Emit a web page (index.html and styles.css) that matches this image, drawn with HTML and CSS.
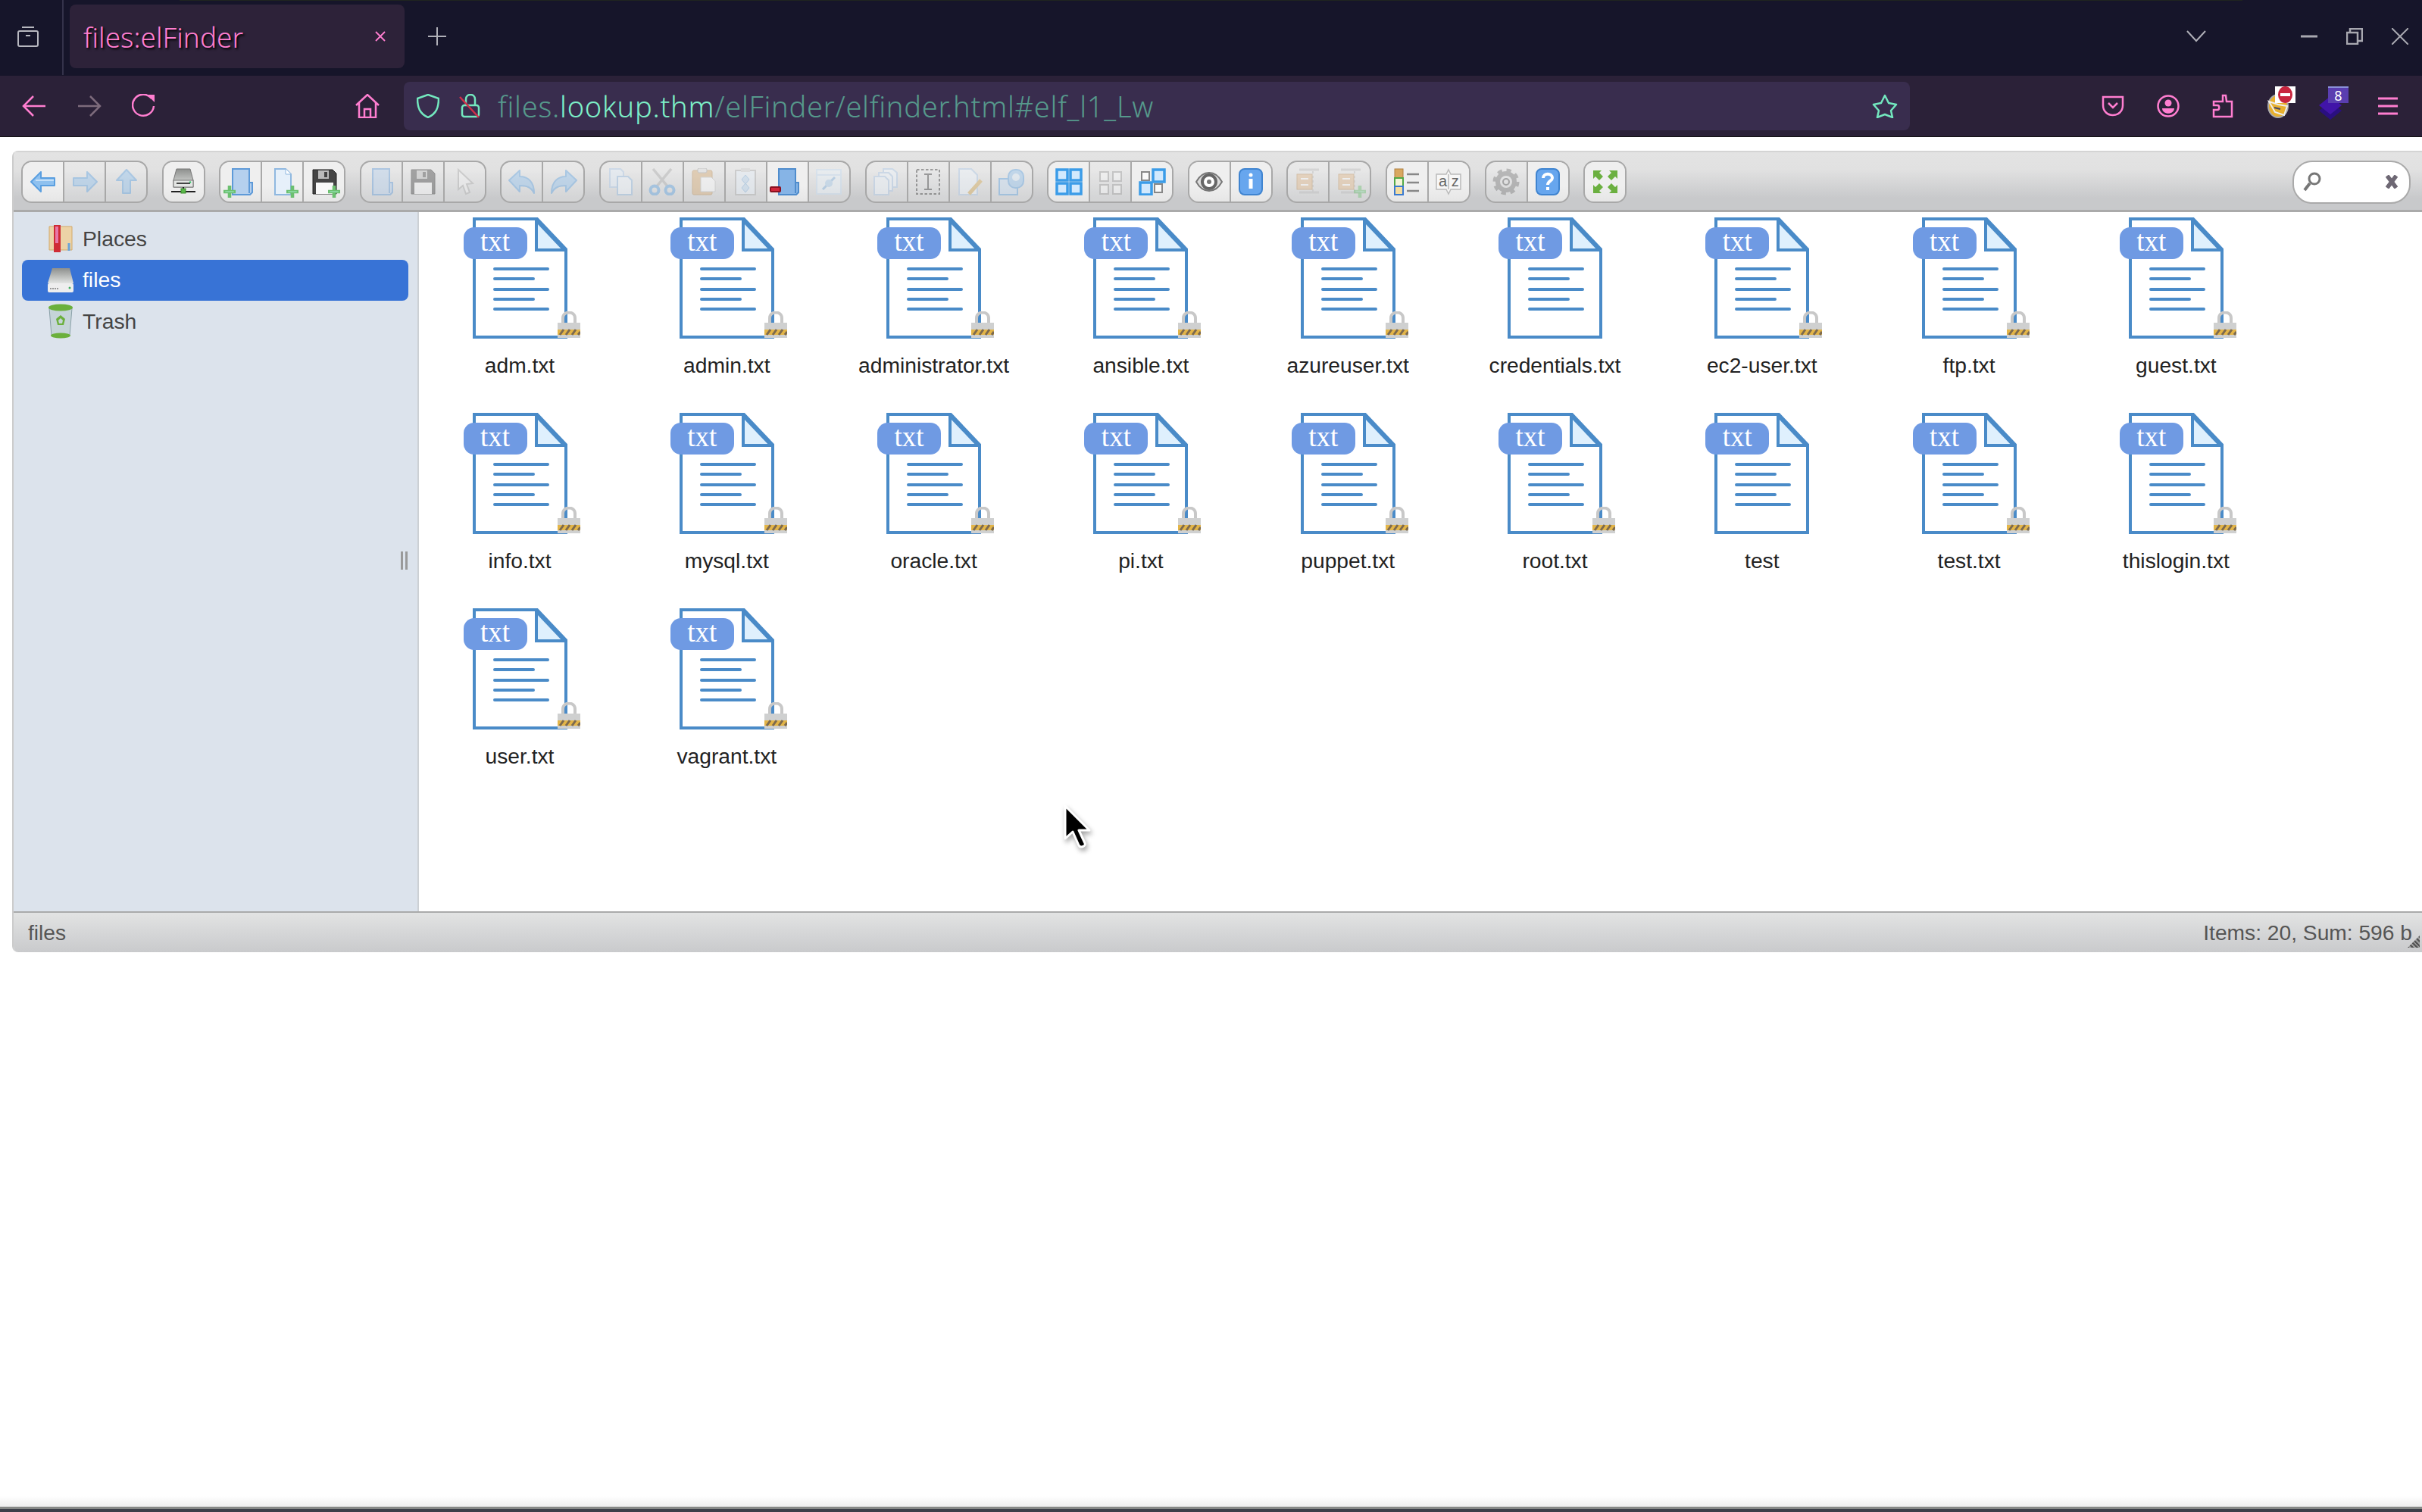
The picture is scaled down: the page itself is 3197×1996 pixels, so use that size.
FILE: index.html
```html
<!doctype html>
<html lang="en">

<head>
  <meta charset="utf-8">
  <title>files:elFinder</title>
  <link rel="stylesheet" href="styles.css">
</head>

<body>
  <svg class="defs" width="0" height="0">
    <defs>
      <linearGradient id="driveg" x1="0" y1="0" x2="0" y2="1"><stop offset="0" stop-color="#8d8f8d"/><stop offset="1" stop-color="#e2e4e2"/></linearGradient>
      <symbol id="i-back" viewBox="0 0 36 36"><path d="M2 18 15 5v8h18v10H15v8z" fill="#8fc1ef" stroke="#5a9fe0" stroke-width="2" stroke-linejoin="round"/><path d="M8 16h24" stroke="#c5e0f8" stroke-width="2"/></symbol>
      <symbol id="i-fwd" viewBox="0 0 36 36"><path d="M34 18 21 5v8H3v10h18v8z" fill="#8fc1ef" stroke="#5a9fe0" stroke-width="2" stroke-linejoin="round"/></symbol>
      <symbol id="i-up" viewBox="0 0 36 36"><path d="M18 2 5 16h8v17h10V16h8z" fill="#8fc1ef" stroke="#5a9fe0" stroke-width="2" stroke-linejoin="round"/></symbol>
      <symbol id="i-net" viewBox="0 0 36 36"><path d="M9 1h18l4 15v9H5v-9z" fill="url(#driveg)" stroke="#777"/><rect x="5" y="16" width="26" height="9" fill="#e4e6e4" stroke="#777"/><path d="M9 20h18" stroke="#444" stroke-width="2"/><circle cx="27" cy="18.500" r="1.200" fill="#35c46a"/><path d="M18 25v6M2 31h32" stroke="#222" stroke-width="2"/><rect x="15" y="27" width="6" height="6" fill="#58b848" stroke="#3c8a2e"/></symbol>
      <symbol id="i-plus" viewBox="0 0 14 14"><path d="M5 0h4v5h5v4H9v5H5V9H0V5h5z" fill="#6cc070"/><path d="M2 7h10" stroke="#9be7c0"/></symbol>
      <symbol id="i-folder" viewBox="0 0 36 36"><path d="M7 1h22v18h4v13l-3 3H7z" fill="#b5d0ee" stroke="#5e9ad8" stroke-width="2"/><path d="M29 19v14" stroke="#5e9ad8" stroke-width="2"/></symbol>
      <symbol id="i-folder-dark" viewBox="0 0 36 36"><path d="M7 1h22v18h4v13l-3 3H7z" fill="#86b4e6" stroke="#4f8ccc" stroke-width="2"/><path d="M29 19v14" stroke="#4f8ccc" stroke-width="2"/></symbol>
      <symbol id="i-doc" viewBox="0 0 36 36"><path d="M8 1h14l7 7v27H8z" fill="#e6f0fa" stroke="#8fb8e0" stroke-width="2"/><path d="M22 1v7h7" fill="#fff" stroke="#8fb8e0"/></symbol>
      <symbol id="i-floppy" viewBox="0 0 36 36"><path d="M3 2h26l5 5v27H3z" fill="#444" stroke="#222"/><rect x="10" y="3" width="14" height="11" fill="#bbb"/><rect x="18" y="5" width="4" height="7" fill="#444"/><rect x="7" y="19" width="23" height="15" fill="#f8f8f8"/></symbol>
      <symbol id="i-cursor" viewBox="0 0 36 36"><path d="M10 2v26l6-5 4 11 5-2-4-11 8-1z" fill="#f2f2f2" stroke="#aaa" stroke-width="2"/></symbol>
      <symbol id="i-undo" viewBox="0 0 36 36"><path d="M1 16 15 3v8c11 0 19 7 19 22-4-8-10-10-19-10v8z" fill="#8fc1ef" stroke="#5a9fe0" stroke-width="2" stroke-linejoin="round"/></symbol>
      <symbol id="i-redo" viewBox="0 0 36 36"><path d="M35 16 21 3v8C10 11 2 18 2 33c4-8 10-10 19-10v8z" fill="#8fc1ef" stroke="#5a9fe0" stroke-width="2" stroke-linejoin="round"/></symbol>
      <symbol id="i-copy" viewBox="0 0 36 36"><path d="M4 1h14l4 4v20H4z" fill="#e3eefa" stroke="#a9c7e6" stroke-width="2"/><path d="M14 11h14l5 5v19H14z" fill="#eef5fc" stroke="#8fb8e0" stroke-width="2"/></symbol>
      <symbol id="i-cut" viewBox="0 0 36 36"><path d="M6 1l20 24M30 1 10 25" stroke="#aaa" stroke-width="3.500"/><circle cx="8" cy="29" r="5.500" fill="none" stroke="#5a9fe0" stroke-width="4"/><circle cx="28" cy="29" r="5.500" fill="none" stroke="#5a9fe0" stroke-width="4"/></symbol>
      <symbol id="i-paste" viewBox="0 0 36 36"><rect x="3" y="3" width="26" height="32" rx="2" fill="#d6a970" stroke="#b98a4e"/><rect x="10" y="0" width="12" height="6" rx="2" fill="#ddd" stroke="#999"/><path d="M14 12h14l5 5v14H14z" fill="#fff" stroke="#bbb"/></symbol>
      <symbol id="i-dup" viewBox="0 0 36 36"><rect x="5" y="3" width="26" height="32" fill="#e8f1fa" stroke="#aaa" stroke-width="2"/><rect x="12" y="0" width="12" height="5" fill="#ccc"/><path d="M18 9l5 6-5 6-5-6zM18 20l5 6-5 6-5-6z" fill="#bcd8f2" stroke="#7eb0e0"/></symbol>
      <symbol id="i-empty" viewBox="0 0 36 36"><rect x="2" y="2" width="32" height="32" fill="#eaf3fb" stroke="#c4dcf2" stroke-width="2"/><path d="M2 9h32" stroke="#c4dcf2" stroke-width="2"/><path d="M10 28 26 12" stroke="#7eb0e0" stroke-width="3"/><circle cx="18" cy="20" r="5" fill="#a8ccee"/></symbol>
      <symbol id="i-stack" viewBox="0 0 36 36"><path d="M14 1h12l6 5v19H14z" fill="#eef5fc" stroke="#a9c7e6" stroke-width="2"/><path d="M8 6h13l5 5v19H8z" fill="#eef5fc" stroke="#a9c7e6" stroke-width="2"/><path d="M2 11h14l5 5v19H2z" fill="#eef5fc" stroke="#a9c7e6" stroke-width="2"/></symbol>
      <symbol id="i-rename" viewBox="0 0 36 36"><rect x="3" y="2" width="30" height="32" fill="none" stroke="#333" stroke-width="2" stroke-dasharray="3.500 2.500"/><path d="M13 8h10M13 28h10M18 8v20" stroke="#333" stroke-width="2"/></symbol>
      <symbol id="i-edit" viewBox="0 0 36 36"><path d="M4 1h16l8 8v26H4z" fill="#eef5fc" stroke="#a9c7e6" stroke-width="2"/><path d="M17 34 33 16" stroke="#d4a850" stroke-width="5"/></symbol>
      <symbol id="i-resize" viewBox="0 0 36 36"><rect x="2" y="14" width="24" height="21" fill="#c4dcf2" stroke="#5a9fe0" stroke-width="2"/><rect x="14" y="2" width="20" height="24" rx="9" fill="#8fc1ef" stroke="#5a9fe0" stroke-width="2"/><circle cx="24" cy="12" r="5" fill="#dcecfa"/></symbol>
      <symbol id="i-grid" viewBox="0 0 36 36"><g fill="#d2e9fd" stroke="#3b9ce8" stroke-width="3.500"><rect x="2" y="2" width="14" height="14"/><rect x="20" y="2" width="14" height="14"/><rect x="2" y="20" width="14" height="14"/><rect x="20" y="20" width="14" height="14"/></g></symbol>
      <symbol id="i-small" viewBox="0 0 36 36"><g fill="#fafafa" stroke="#999" stroke-width="2"><rect x="4" y="5" width="11" height="12"/><rect x="21" y="5" width="11" height="12"/><rect x="4" y="22" width="11" height="12"/><rect x="21" y="22" width="11" height="12"/></g></symbol>
      <symbol id="i-mixed" viewBox="0 0 36 36"><g fill="#d2e9fd" stroke="#3b9ce8" stroke-width="3.500"><rect x="19" y="2" width="15" height="16"/><rect x="2" y="19" width="15" height="16"/></g><g fill="#fafafa" stroke="#888" stroke-width="2"><rect x="4" y="5" width="10" height="11"/><rect x="21" y="21" width="10" height="11"/></g></symbol>
      <symbol id="i-eye" viewBox="0 0 36 36"><path d="M1 18C6 9 12 6 18 6s12 3 17 12c-5 9-11 12-17 12S6 27 1 18z" fill="#ddd" stroke="#777" stroke-width="2"/><circle cx="18" cy="18" r="9" fill="#fff" stroke="#666" stroke-width="4"/><circle cx="18" cy="18" r="3" fill="#777"/></symbol>
      <symbol id="i-info" viewBox="0 0 36 36"><rect x="3" y="1" width="30" height="34" rx="7" fill="#67a6ee" stroke="#3f84d0" stroke-width="2"/><circle cx="18" cy="9" r="2.500" fill="#fff"/><rect x="15.500" y="14" width="5" height="13" fill="#fff"/></symbol>
      <symbol id="i-cab" viewBox="0 0 36 36"><path d="M6 2h26M6 32h26" stroke="#bbb" stroke-width="3"/><path d="M24 4v28" stroke="#bbb" stroke-width="2" stroke-dasharray="3 3"/><rect x="3" y="8" width="20" height="20" fill="#e3b888" stroke="#c09058"/><path d="M8 14h10M8 22h10" stroke="#fff" stroke-width="2"/></symbol>
      <symbol id="i-sort" viewBox="0 0 36 36"><rect x="2" y="1" width="11" height="12" fill="#d9a860" stroke="#b08040"/><rect x="2" y="13" width="11" height="11" fill="#f4f4d8" stroke="#52a848" stroke-width="2"/><rect x="2" y="24" width="11" height="11" fill="#f4dca0" stroke="#3a7ad0" stroke-width="2"/><path d="M18 8h16M18 19h16M18 30h16" stroke="#888" stroke-width="2.500"/></symbol>
      <symbol id="i-gear" viewBox="0 0 36 36"><circle cx="18" cy="18" r="11" fill="none" stroke="#777" stroke-width="6"/><circle cx="18" cy="18" r="15" fill="none" stroke="#777" stroke-width="5" stroke-dasharray="6 5.800"/><circle cx="18" cy="18" r="4" fill="none" stroke="#555" stroke-width="2"/></symbol>
      <symbol id="i-help" viewBox="0 0 36 36"><rect x="3" y="1" width="30" height="34" rx="7" fill="#67a6ee" stroke="#3f84d0" stroke-width="2"/><path d="M12 13c0-7 12-7 12 0 0 4-6 4-6 9" fill="none" stroke="#fff" stroke-width="4"/><rect x="16" y="25" width="4" height="4" fill="#fff"/></symbol>
      <symbol id="i-full" viewBox="0 0 36 36"><g fill="#6bb040"><path d="M2 3h11l-3 3 5 5-5 5-5-5-3 3zM34 3v11l-3-3-5 5-5-5 5-5-3-3zM2 33V22l3 3 5-5 5 5-5 5 3 3zM34 33H23l3-3-5-5 5-5 5 5 3-3z"/></g></symbol>
      <symbol id="i-lock" viewBox="0 0 30 35"><path d="M7 17V9c0-10 16-10 16 0v8" fill="none" stroke="#c8c8c8" stroke-width="4"/><rect x="0" y="15" width="30" height="20" fill="#cfd0d0"/><rect x="0" y="24" width="30" height="7" fill="#e3b548"/><path d="M3 31l5-7M11 31l5-7M19 31l5-7M27 31l3-4" stroke="#7d6a4e" stroke-width="3"/></symbol>
      <symbol id="i-txt" viewBox="0 0 125 160"><path d="M2 2h83l38 40v116H2z" fill="#fff" stroke="#4a8bc8" stroke-width="4"/><path d="M84 4v39h37z" fill="#dff0fd" stroke="#4a8bc8" stroke-width="4"/><path d="M29 68h70M29 81h51M29 95h70M29 108h51M29 121h70" stroke="#4a8bc8" stroke-width="4" stroke-linecap="round"/></symbol>
    </defs>
  </svg>

  <header class="titlebar">
    <div class="tabs-btn">
      <svg width="32" height="32" viewBox="0 0 32 32" fill="none" stroke="#b8b8c0" stroke-width="2"><path d="M8 4h16"/><rect x="3" y="9" width="26" height="20" rx="2"/><path d="M13 15h6"/></svg>
    </div>
    <div class="tab">
      <span class="tab-title">files:elFinder</span>
      <svg width="14" height="14" viewBox="0 0 14 14" stroke="#ff7ed0" stroke-width="1.800"><path d="M1 1l12 12M13 1 1 13"/></svg>
    </div>
    <div class="newtab">
      <svg width="26" height="26" viewBox="0 0 26 26" stroke="#b0b0b8" stroke-width="2"><path d="M13 1v24M1 13h24"/></svg>
    </div>
    <div class="winbtns">
      <svg class="chev" width="26" height="16" viewBox="0 0 26 16" fill="none" stroke="#b0b0b8" stroke-width="2"><path d="M1 1l12 13L25 1"/></svg>
      <svg class="win" width="22" height="4" viewBox="0 0 22 4" stroke="#a8a8b0" stroke-width="3"><path d="M0 2h22"/></svg>
      <svg class="win" width="22" height="22" viewBox="0 0 22 22" fill="none" stroke="#a8a8b0" stroke-width="2.500"><rect x="1" y="6" width="14" height="15"/><path d="M5 5V1h16v16h-5"/></svg>
      <svg class="win" width="22" height="22" viewBox="0 0 22 22" stroke="#a8a8b0" stroke-width="2"><path d="M0 0l22 22M22 0 0 22"/></svg>
    </div>
  </header>

  <nav class="navbar">
    <span class="slot"><svg width="32" height="28" viewBox="0 0 32 28" fill="none" stroke="#ff7ed0" stroke-width="2.500"><path d="M31 14H3M15 1 2 14l13 13"/></svg></span>
    <span class="slot"><svg width="32" height="28" viewBox="0 0 32 28" fill="none" stroke="#7d6b7c" stroke-width="2.500"><path d="M1 14h28M17 1l13 13-13 13"/></svg></span>
    <span class="slot"><svg width="32" height="32" viewBox="0 0 32 32" fill="none" stroke="#ff7ed0" stroke-width="2.500"><path d="M26 6a14 14 0 1 0 3 10"/><path d="M20 1h10v10z" fill="#ff7ed0" stroke="none"/></svg></span>
    <span class="slot home"><svg width="32" height="32" viewBox="0 0 32 32" fill="none" stroke="#ff7ed0" stroke-width="2.500"><path d="M1 15 16 1l15 14M5 12v19h22V12M12 31V20h8v11"/></svg></span>
    <div class="urlbar">
      <svg class="shield" width="30" height="32" viewBox="0 0 30 32" fill="none" stroke="#73e8bf" stroke-width="2.500"><path d="M15 1 29 6c0 12-3 20-14 25C4 26 1 18 1 6z"/></svg>
      <svg class="padlock" width="28" height="32" viewBox="0 0 28 32" fill="none" stroke="#73e8bf" stroke-width="2.500"><path d="M9 14V7c0-8 12-8 12 0v7"/><rect x="4" y="15" width="22" height="15" rx="3"/><path d="M1 4l25 27" stroke="#d0304a"/></svg>
      <span class="url">files.<b>lookup.thm</b>/elFinder/elfinder.html#elf_l1_Lw</span>
      <svg class="star" width="34" height="32" viewBox="0 0 34 32" fill="none" stroke="#73e8bf" stroke-width="2.500" stroke-linejoin="round"><path d="M17 2l5 10 10 2-7 8 2 9-10-4-10 4 2-9-7-8 10-2z"/></svg>
    </div>
    <div class="navright">
      <span class="slot"><svg width="30" height="28" viewBox="0 0 30 28" fill="none" stroke="#ff7ed0" stroke-width="2.500"><path d="M2 2h26v11c0 8-6 13-13 13S2 21 2 13z"/><path d="M9 10l6 6 6-6"/></svg></span>
      <span class="slot"><svg width="30" height="30" viewBox="0 0 30 30" fill="none" stroke="#ff7ed0" stroke-width="2.500"><circle cx="15" cy="15" r="13.500"/><circle cx="15" cy="11" r="4.500" fill="#ff7ed0" stroke="none"/><path d="M7 18h16c0 9-16 9-16 0z" fill="#ff7ed0" stroke="none"/></svg></span>
      <span class="slot"><svg width="28" height="32" viewBox="0 0 28 32" fill="none" stroke="#ff7ed0" stroke-width="2.500"><path d="M10 10h4V2h4l1 8h7v20H2v-9h5c3 0 3-6 0-6H2v-5z"/></svg></span>
      <span class="slot ext">
        <svg width="32" height="32" viewBox="0 0 32 32"><ellipse cx="16" cy="16" rx="13" ry="15" fill="#e8b02e" stroke="#aaa" stroke-width="2"/><path d="M4 10l12 4 12 2-4 12-12-4z" fill="#e8b02e" stroke="#eee" stroke-width="2"/><path d="M11 18l8 2" stroke="#446" stroke-width="2"/></svg>
        <span class="ext-badge stop"><i></i></span>
      </span>
      <span class="slot ext">
        <svg class="ext-gem" width="34" height="34" viewBox="0 0 34 34"><path d="M17 8 32 20 17 32 2 20z" fill="#2a0f80"/><path d="M17 1 32 13 17 25 2 13z" fill="#4114a8"/></svg>
        <span class="ext-badge count">8</span>
      </span>
      <span class="slot"><svg width="26" height="24" viewBox="0 0 26 24" stroke="#ff7ed0" stroke-width="3"><path d="M0 2h26M0 12h26M0 22h26"/></svg></span>
    </div>
  </nav>

  <main class="page">
    <section class="finder">
      <div class="toolbar">
        <div class="group">
          <span class="btn on"><svg><use href="#i-back"/></svg></span>
          <span class="btn off"><svg><use href="#i-fwd"/></svg></span>
          <span class="btn off"><svg><use href="#i-up"/></svg></span>
        </div>
        <div class="group">
          <span class="btn on"><svg><use href="#i-net"/></svg></span>
        </div>
        <div class="group">
          <span class="btn on plus-l"><svg><use href="#i-folder"/></svg><svg class="plus"><use href="#i-plus"/></svg></span>
          <span class="btn on plus-r"><svg><use href="#i-doc"/></svg><svg class="plus"><use href="#i-plus"/></svg></span>
          <span class="btn on plus-r"><svg><use href="#i-floppy"/></svg><svg class="plus"><use href="#i-plus"/></svg></span>
        </div>
        <div class="group">
          <span class="btn off"><svg><use href="#i-folder"/></svg></span>
          <span class="btn off"><svg><use href="#i-floppy"/></svg></span>
          <span class="btn off"><svg><use href="#i-cursor"/></svg></span>
        </div>
        <div class="group">
          <span class="btn off"><svg><use href="#i-undo"/></svg></span>
          <span class="btn off"><svg><use href="#i-redo"/></svg></span>
        </div>
        <div class="group">
          <span class="btn off"><svg><use href="#i-copy"/></svg></span>
          <span class="btn off"><svg><use href="#i-cut"/></svg></span>
          <span class="btn off"><svg><use href="#i-paste"/></svg></span>
          <span class="btn off"><svg><use href="#i-dup"/></svg></span>
          <span class="btn on minus"><svg><use href="#i-folder-dark"/></svg><i class="minus-mark"></i></span>
          <span class="btn off"><svg><use href="#i-empty"/></svg></span>
        </div>
        <div class="group">
          <span class="btn off"><svg><use href="#i-stack"/></svg></span>
          <span class="btn off"><svg><use href="#i-rename"/></svg></span>
          <span class="btn off"><svg><use href="#i-edit"/></svg></span>
          <span class="btn off"><svg><use href="#i-resize"/></svg></span>
        </div>
        <div class="group">
          <span class="btn on"><svg><use href="#i-grid"/></svg></span>
          <span class="btn off"><svg><use href="#i-small"/></svg></span>
          <span class="btn on"><svg><use href="#i-mixed"/></svg></span>
        </div>
        <div class="group">
          <span class="btn on"><svg><use href="#i-eye"/></svg></span>
          <span class="btn on"><svg><use href="#i-info"/></svg></span>
        </div>
        <div class="group">
          <span class="btn off"><svg><use href="#i-cab"/></svg></span>
          <span class="btn off plus-r"><svg><use href="#i-cab"/></svg><svg class="plus"><use href="#i-plus"/></svg></span>
        </div>
        <div class="group">
          <span class="btn on"><svg><use href="#i-sort"/></svg></span>
          <span class="btn on az">
            <svg viewBox="0 0 36 36"><path d="M2 8h13l3-6 3 6h13v20H21l-3 6-3-6H2z" fill="#f7f7f7" stroke="#bbb" stroke-width="1.500"/><path d="M18 8v20" stroke="#999"/></svg>
            <span class="az-text">a z</span>
          </span>
        </div>
        <div class="group">
          <span class="btn off"><svg><use href="#i-gear"/></svg></span>
          <span class="btn on"><svg><use href="#i-help"/></svg></span>
        </div>
        <div class="group">
          <span class="btn on"><svg><use href="#i-full"/></svg></span>
        </div>
        <div class="search">
          <svg width="24" height="26" viewBox="0 0 24 26" fill="none" stroke="#777" stroke-width="3"><circle cx="15" cy="9" r="7"/><path d="M9 15 2 24" stroke-width="4"/></svg>
          <svg width="16" height="18" viewBox="0 0 16 18" stroke="#6e6874" stroke-width="5.500"><path d="M2 1l12 16M14 1 2 17"/></svg>
        </div>
      </div>

      <div class="workzone">
        <aside class="sidebar">
          <div class="place">
            <svg width="36" height="36" viewBox="0 0 36 36"><path d="M3 2h30v31H3z" fill="#ecd3a6" stroke="#d2a868"/><rect x="9" y="0" width="9" height="36" fill="#cf2c35"/><rect x="11" y="2" width="4" height="22" fill="#e878a8"/><path d="M29 24v10" stroke="#6aa4d8" stroke-width="3"/></svg>
            <span>Places</span>
          </div>
          <div class="place current">
            <svg width="36" height="36" viewBox="0 0 36 36"><path d="M7 2h23l5 20H1z" fill="url(#driveg)"/><rect x="1" y="22" width="34" height="12" rx="2" fill="#eeeeee"/><path d="M4 29h12" stroke="#999" stroke-width="2" stroke-dasharray="2 1"/><circle cx="30" cy="28" r="1.500" fill="#40b060"/></svg>
            <span>files</span>
          </div>
          <div class="place">
            <svg width="36" height="46" viewBox="0 0 36 46"><path d="M3 6h30l-3 36H6z" fill="#c5d4d8" stroke="#8aa0a8"/><ellipse cx="18" cy="5" rx="16" ry="4.500" fill="#6bb03c"/><ellipse cx="18" cy="42" rx="13" ry="3.500" fill="#6bb03c"/><path d="M18 15l6 5-2 8h-8l-2-8z" fill="#6bb03c"/><path d="M18 19l3 3-1 4h-4l-1-4z" fill="#c5d4d8"/></svg>
            <span>Trash</span>
          </div>
          <i class="grip"></i>
        </aside>

        <div class="files">
          <figure class="file"><div class="icon"><svg class="doc"><use href="#i-txt"/></svg><span class="badge">txt</span><svg class="lock"><use href="#i-lock"/></svg></div><figcaption>adm.txt</figcaption></figure>
          <figure class="file"><div class="icon"><svg class="doc"><use href="#i-txt"/></svg><span class="badge">txt</span><svg class="lock"><use href="#i-lock"/></svg></div><figcaption>admin.txt</figcaption></figure>
          <figure class="file"><div class="icon"><svg class="doc"><use href="#i-txt"/></svg><span class="badge">txt</span><svg class="lock"><use href="#i-lock"/></svg></div><figcaption>administrator.txt</figcaption></figure>
          <figure class="file"><div class="icon"><svg class="doc"><use href="#i-txt"/></svg><span class="badge">txt</span><svg class="lock"><use href="#i-lock"/></svg></div><figcaption>ansible.txt</figcaption></figure>
          <figure class="file"><div class="icon"><svg class="doc"><use href="#i-txt"/></svg><span class="badge">txt</span><svg class="lock"><use href="#i-lock"/></svg></div><figcaption>azureuser.txt</figcaption></figure>
          <figure class="file"><div class="icon"><svg class="doc"><use href="#i-txt"/></svg><span class="badge">txt</span></div><figcaption>credentials.txt</figcaption></figure>
          <figure class="file"><div class="icon"><svg class="doc"><use href="#i-txt"/></svg><span class="badge">txt</span><svg class="lock"><use href="#i-lock"/></svg></div><figcaption>ec2-user.txt</figcaption></figure>
          <figure class="file"><div class="icon"><svg class="doc"><use href="#i-txt"/></svg><span class="badge">txt</span><svg class="lock"><use href="#i-lock"/></svg></div><figcaption>ftp.txt</figcaption></figure>
          <figure class="file"><div class="icon"><svg class="doc"><use href="#i-txt"/></svg><span class="badge">txt</span><svg class="lock"><use href="#i-lock"/></svg></div><figcaption>guest.txt</figcaption></figure>
          <figure class="file"><div class="icon"><svg class="doc"><use href="#i-txt"/></svg><span class="badge">txt</span><svg class="lock"><use href="#i-lock"/></svg></div><figcaption>info.txt</figcaption></figure>
          <figure class="file"><div class="icon"><svg class="doc"><use href="#i-txt"/></svg><span class="badge">txt</span><svg class="lock"><use href="#i-lock"/></svg></div><figcaption>mysql.txt</figcaption></figure>
          <figure class="file"><div class="icon"><svg class="doc"><use href="#i-txt"/></svg><span class="badge">txt</span><svg class="lock"><use href="#i-lock"/></svg></div><figcaption>oracle.txt</figcaption></figure>
          <figure class="file"><div class="icon"><svg class="doc"><use href="#i-txt"/></svg><span class="badge">txt</span><svg class="lock"><use href="#i-lock"/></svg></div><figcaption>pi.txt</figcaption></figure>
          <figure class="file"><div class="icon"><svg class="doc"><use href="#i-txt"/></svg><span class="badge">txt</span><svg class="lock"><use href="#i-lock"/></svg></div><figcaption>puppet.txt</figcaption></figure>
          <figure class="file"><div class="icon"><svg class="doc"><use href="#i-txt"/></svg><span class="badge">txt</span><svg class="lock"><use href="#i-lock"/></svg></div><figcaption>root.txt</figcaption></figure>
          <figure class="file"><div class="icon"><svg class="doc"><use href="#i-txt"/></svg><span class="badge">txt</span></div><figcaption>test</figcaption></figure>
          <figure class="file"><div class="icon"><svg class="doc"><use href="#i-txt"/></svg><span class="badge">txt</span><svg class="lock"><use href="#i-lock"/></svg></div><figcaption>test.txt</figcaption></figure>
          <figure class="file"><div class="icon"><svg class="doc"><use href="#i-txt"/></svg><span class="badge">txt</span><svg class="lock"><use href="#i-lock"/></svg></div><figcaption>thislogin.txt</figcaption></figure>
          <figure class="file"><div class="icon"><svg class="doc"><use href="#i-txt"/></svg><span class="badge">txt</span><svg class="lock"><use href="#i-lock"/></svg></div><figcaption>user.txt</figcaption></figure>
          <figure class="file"><div class="icon"><svg class="doc"><use href="#i-txt"/></svg><span class="badge">txt</span><svg class="lock"><use href="#i-lock"/></svg></div><figcaption>vagrant.txt</figcaption></figure>
        </div>
      </div>

      <footer class="statusbar">
        <span>files</span>
        <span class="sum">Items: 20, Sum: 596 b</span>
        <i class="resizer"></i>
      </footer>
    </section>

    <svg class="cursor" width="40" height="62" viewBox="0 0 40 62"><path d="M5 3v43l10-9 8 18c2 4 10 1 8-3l-8-17h14z" fill="#000" stroke="#fff" stroke-width="3" stroke-linejoin="round"/></svg>
  </main>

  <div class="bottom"></div>
</body>

</html>
```

FILE: styles.css
```css
html, body { height:100%; margin:0; }
body { display:flex; flex-direction:column; background:#fff; overflow:hidden; font-family:"Liberation Sans",Arial,sans-serif; }
.defs { position:absolute; }

/* browser chrome */
.titlebar { flex:none; display:flex; align-items:center; box-sizing:border-box; height:100px; padding-bottom:4px; background:linear-gradient(#20241f,#20241f) 237px 0 / 2723px 1px no-repeat, #16152a; font-family:"Noto Sans",sans-serif; }
.tabs-btn { display:flex; align-items:center; justify-content:center; box-sizing:border-box; width:84px; height:99px; padding:0 8px 3px 0; border-right:2px solid #34324a; align-self:flex-start; }
.tab { display:flex; align-items:center; justify-content:space-between; box-sizing:border-box; width:442px; height:84px; margin-left:8px; padding:0 25px 0 18px; background:#2d2239; border-radius:8px; }
.tab-title { color:#ff7ed0; font-size:37px; font-weight:340; text-shadow:2px 2px 3px #000; }
.newtab { display:flex; margin-left:30px; }
.winbtns { display:flex; align-items:center; margin-left:auto; padding-right:18px; }
.winbtns .chev { margin-right:87px; }
.winbtns .win { margin-left:38px; }

.navbar { flex:none; display:flex; align-items:center; box-sizing:border-box; height:81px; padding:0 9px; background:#2b2138; border-bottom:1px solid #111; font-family:"Noto Sans",sans-serif; }
.slot { flex:none; position:relative; display:flex; align-items:center; justify-content:center; width:72.500px; height:60px; }
.slot.home { margin-left:222px; }
.urlbar { flex:none; display:flex; align-items:center; box-sizing:border-box; width:1988px; height:64px; margin-left:12px; padding:0 16px 0 17px; background:#392d4e; border-radius:8px; }
.padlock { margin-left:26px; }
.url { margin-left:23px; color:#56998c; font-size:38px; font-weight:340; letter-spacing:.75px; white-space:nowrap; }
.url b { color:#7df0c8; font-weight:340; }
.star { margin-left:auto; }
.navright { display:flex; margin-left:auto; }
.ext-badge { position:absolute; left:36px; top:4px; width:27px; height:22px; text-align:center; }
.stop { left:32px; background:#fff; }
.stop::before { content:""; position:absolute; left:4px; top:0; width:19px; height:22px; border-radius:50%; background:#c8253e; }
.stop i { position:absolute; left:7px; top:9px; width:13px; height:4px; background:#fff; }
.count { left:30px; background:#5a3eb0; color:#fff; font-size:18px; line-height:20px; border-top:2px solid #8a90d8; box-sizing:border-box; }
.ext-gem { margin-left:-6px; margin-top:6px; }

/* elfinder window */
.page { flex:1; position:relative; padding-top:18px; padding-left:16px; }
.finder { box-sizing:border-box; display:flex; flex-direction:column; height:1058px; border-left:2px solid #ccc; border-radius:8px 0 0 8px; overflow:hidden; }

.toolbar { flex:none; display:flex; align-items:center; gap:18.600px; box-sizing:border-box; height:81px; padding:2px 15px 0 10px; background:linear-gradient(#e3e3e3,#e1e1e1 30%,#c8c9cb 80%); border-top:2px solid #d4d4d4; border-bottom:3px solid #aaa; }
.group { flex:none; display:flex; border:2px solid #a8a8a8; border-radius:14px; overflow:hidden; }
.btn { position:relative; display:flex; align-items:center; justify-content:center; width:53px; height:52px; }
.btn + .btn { border-left:2px solid #a8a8a8; }
.btn svg { width:36px; height:36px; filter:blur(.6px); }
.btn.on { background:linear-gradient(#efefef 60%,#e6e6e6); }
.btn.off { background:rgba(255,255,255,.22); }
.btn.off svg { opacity:.42; }
.btn .plus { position:absolute; top:31px; width:16px; height:16px; }
.plus-l .plus { left:4px; }
.plus-r .plus { right:5px; }
.minus-mark { position:absolute; left:3px; top:32px; width:15px; height:8px; background:#d0253a; border:2px solid #8a1020; border-radius:2px; box-sizing:border-box; }
.az-text { position:absolute; left:0; right:0; top:12px; text-align:center; color:#666; font-size:20px; line-height:26px; white-space:pre; }

.search { flex:none; display:flex; align-items:center; justify-content:space-between; box-sizing:border-box; width:156px; height:57px; margin-left:auto; padding:0 15px 0 12px; background:#fff; border:2px solid #aaa; border-radius:26px; }

.workzone { flex:1; display:flex; min-height:0; }
.sidebar { flex:none; position:relative; box-sizing:border-box; width:535px; padding:8px 12px 0 11px; background:#dce3ec; border-right:2px solid #ccd0d4; }
.place { display:flex; align-items:center; box-sizing:border-box; height:54.500px; padding-left:33px; gap:11px; color:#444; font-size:28.300px; border-radius:8px; }
.place svg { flex:none; }
.place.current { background:#3873d6; color:#fff; }
.grip { position:absolute; left:511px; top:448px; width:3px; height:24px; border-left:3px solid #9a9a9a; border-right:3px solid #9a9a9a; }

.files { flex:1; display:grid; grid-template-columns:repeat(auto-fill,264px); grid-auto-rows:258px; column-gap:9.300px; align-content:start; padding:7px 0 0 1px; }
.file { margin:0; display:flex; flex-direction:column; align-items:center; }
.icon { position:relative; width:125px; height:160px; }
.doc { display:block; width:125px; height:160px; }
.badge { position:absolute; left:-12px; top:13px; width:84px; height:42px; background:#6f9ae3; border-radius:14px; color:#fff; font-family:"Liberation Serif",serif; font-size:37px; line-height:38px; text-align:center; }
.lock { position:absolute; left:112px; top:124px; width:30px; height:35px; }
.file figcaption { margin-top:21px; color:#222; font-size:28.200px; line-height:28px; white-space:nowrap; }

.statusbar { flex:none; position:relative; display:flex; align-items:center; justify-content:space-between; box-sizing:border-box; height:54px; padding:0 13px 0 19px; background:linear-gradient(#e2e3e3,#c9cacc); border-top:2px solid #aaa; color:#555; font-size:28.200px; }
.sum { white-space:nowrap; }
.resizer { position:absolute; right:3px; bottom:6px; width:16px; height:16px; background:repeating-linear-gradient(45deg,#555 0 2px,#999 2px 4px); clip-path:polygon(100% 0,100% 100%,0 100%); }

.cursor { position:absolute; left:1401px; top:880px; filter:drop-shadow(2px 4px 3px rgba(0,0,0,.35)); }

.bottom { flex:none; height:21px; background:linear-gradient(#fff,#eee 14px,#868886 14px,#868886 17px,#3c3e48 17px); }
```
